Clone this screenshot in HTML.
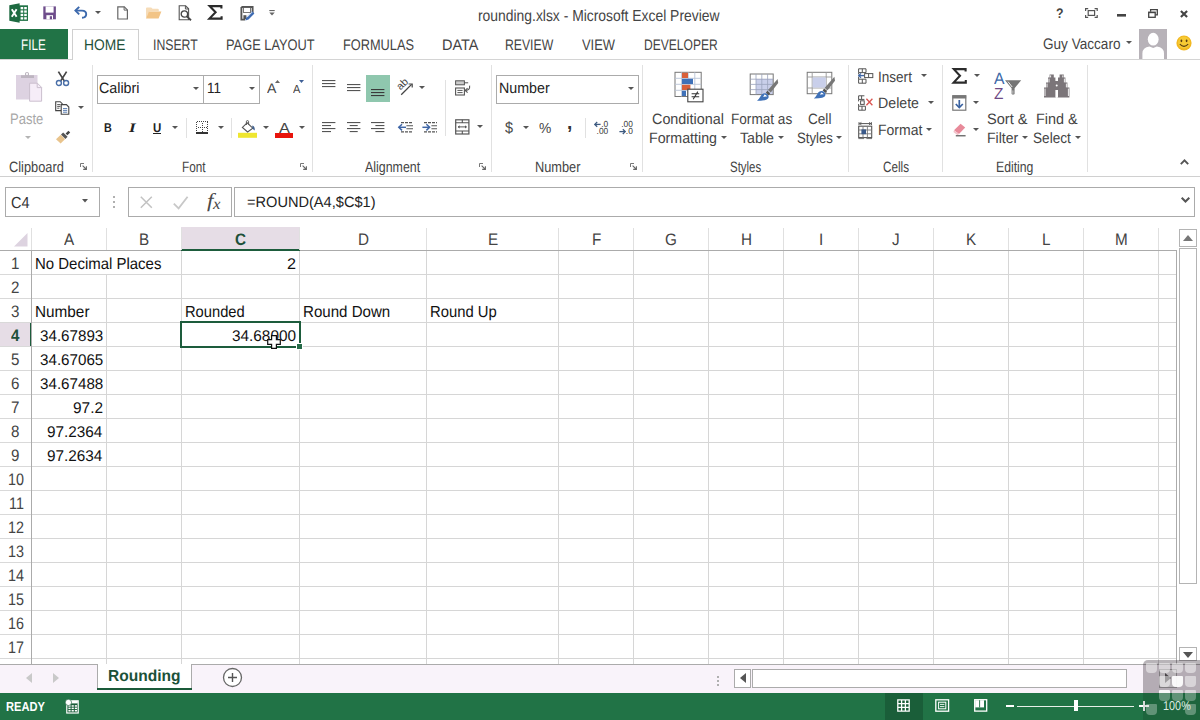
<!DOCTYPE html>
<html><head><meta charset="utf-8"><title>rounding.xlsx - Microsoft Excel Preview</title>
<style>
html,body{margin:0;padding:0;}
body{width:1200px;height:720px;overflow:hidden;background:#fff;position:relative;font-family:"Liberation Sans",sans-serif;text-rendering:geometricPrecision;}
.t{position:absolute;white-space:nowrap;line-height:20px;height:20px;transform-origin:0 50%;display:inline-block;}
.a{position:absolute;}
svg{position:absolute;overflow:visible;}
</style></head><body>
<div class="a" style="left:0px;top:29px;width:68px;height:31px;background:#217346;"></div>
<div class="a" style="left:0px;top:59px;width:1200px;height:1px;background:#d4d4d4;"></div>
<div class="a" style="left:72px;top:29px;width:67px;height:31px;background:#fff;border:1px solid #d0d0d0;box-sizing:border-box;border-bottom:none;"></div>
<div class="a" style="left:0px;top:176px;width:1200px;height:1px;background:#d0d0d0;"></div>
<div class="a" style="left:92px;top:65px;width:1px;height:107px;background:#e1e1e1;"></div>
<div class="a" style="left:312px;top:65px;width:1px;height:107px;background:#e1e1e1;"></div>
<div class="a" style="left:491px;top:65px;width:1px;height:107px;background:#e1e1e1;"></div>
<div class="a" style="left:642px;top:65px;width:1px;height:107px;background:#e1e1e1;"></div>
<div class="a" style="left:848px;top:65px;width:1px;height:107px;background:#e1e1e1;"></div>
<div class="a" style="left:942px;top:65px;width:1px;height:107px;background:#e1e1e1;"></div>
<div class="a" style="left:1087px;top:65px;width:1px;height:107px;background:#e1e1e1;"></div>
<div class="a" style="left:186px;top:118px;width:1px;height:20px;background:#e1e1e1;"></div>
<div class="a" style="left:231px;top:118px;width:1px;height:20px;background:#e1e1e1;"></div>
<div class="a" style="left:445px;top:80px;width:1px;height:56px;background:#e1e1e1;"></div>
<div class="a" style="left:585px;top:118px;width:1px;height:20px;background:#e1e1e1;"></div>
<div class="a" style="left:97px;top:75px;width:107px;height:29px;background:#fff;border:1px solid #ababab;box-sizing:border-box;"></div>
<div class="a" style="left:203px;top:75px;width:57px;height:29px;background:#fff;border:1px solid #ababab;box-sizing:border-box;"></div>
<div class="a" style="left:496px;top:75px;width:143px;height:29px;background:#fff;border:1px solid #ababab;box-sizing:border-box;"></div>
<div class="a" style="left:366px;top:75px;width:24px;height:27px;background:#8fc7ae;"></div>
<div class="a" style="left:5px;top:187px;width:95px;height:30px;background:#fff;border:1px solid #ababab;box-sizing:border-box;"></div>
<div class="a" style="left:128px;top:187px;width:104px;height:30px;background:#fff;border:1px solid #ababab;box-sizing:border-box;"></div>
<div class="a" style="left:234px;top:187px;width:961px;height:30px;background:#fff;border:1px solid #ababab;box-sizing:border-box;"></div>
<div class="a" style="left:113px;top:196px;width:2px;height:2px;background:#b0b0b0;"></div>
<div class="a" style="left:113px;top:201px;width:2px;height:2px;background:#b0b0b0;"></div>
<div class="a" style="left:113px;top:206px;width:2px;height:2px;background:#b0b0b0;"></div>
<div class="a" style="left:181px;top:227px;width:119px;height:23px;background:#e6dde6;"></div>
<div class="a" style="left:0px;top:323px;width:31px;height:23px;background:#e6dde6;"></div>
<div class="a" style="left:0px;top:250px;width:1177px;height:1px;background:#ababab;"></div>
<div class="a" style="left:181px;top:249px;width:119px;height:2px;background:#1d5c3c;"></div>
<div class="a" style="left:30px;top:322px;width:2px;height:25px;background:#1d5c3c;"></div>
<div class="a" style="left:31px;top:228px;width:1px;height:22px;background:#e0e0e0;"></div>
<div class="a" style="left:106px;top:228px;width:1px;height:22px;background:#e0e0e0;"></div>
<div class="a" style="left:181px;top:228px;width:1px;height:22px;background:#e0e0e0;"></div>
<div class="a" style="left:299px;top:228px;width:1px;height:22px;background:#e0e0e0;"></div>
<div class="a" style="left:426px;top:228px;width:1px;height:22px;background:#e0e0e0;"></div>
<div class="a" style="left:558px;top:228px;width:1px;height:22px;background:#e0e0e0;"></div>
<div class="a" style="left:633px;top:228px;width:1px;height:22px;background:#e0e0e0;"></div>
<div class="a" style="left:708px;top:228px;width:1px;height:22px;background:#e0e0e0;"></div>
<div class="a" style="left:783px;top:228px;width:1px;height:22px;background:#e0e0e0;"></div>
<div class="a" style="left:858px;top:228px;width:1px;height:22px;background:#e0e0e0;"></div>
<div class="a" style="left:933px;top:228px;width:1px;height:22px;background:#e0e0e0;"></div>
<div class="a" style="left:1008px;top:228px;width:1px;height:22px;background:#e0e0e0;"></div>
<div class="a" style="left:1083px;top:228px;width:1px;height:22px;background:#e0e0e0;"></div>
<div class="a" style="left:1158px;top:228px;width:1px;height:22px;background:#e0e0e0;"></div>
<div class="a" style="left:32px;top:274px;width:1145px;height:1px;background:#d6d6d6;"></div>
<div class="a" style="left:0px;top:274px;width:31px;height:1px;background:#d9d9d9;"></div>
<div class="a" style="left:32px;top:298px;width:1145px;height:1px;background:#d6d6d6;"></div>
<div class="a" style="left:0px;top:298px;width:31px;height:1px;background:#d9d9d9;"></div>
<div class="a" style="left:32px;top:322px;width:1145px;height:1px;background:#d6d6d6;"></div>
<div class="a" style="left:0px;top:322px;width:31px;height:1px;background:#d9d9d9;"></div>
<div class="a" style="left:32px;top:346px;width:1145px;height:1px;background:#d6d6d6;"></div>
<div class="a" style="left:0px;top:346px;width:31px;height:1px;background:#d9d9d9;"></div>
<div class="a" style="left:32px;top:370px;width:1145px;height:1px;background:#d6d6d6;"></div>
<div class="a" style="left:0px;top:370px;width:31px;height:1px;background:#d9d9d9;"></div>
<div class="a" style="left:32px;top:394px;width:1145px;height:1px;background:#d6d6d6;"></div>
<div class="a" style="left:0px;top:394px;width:31px;height:1px;background:#d9d9d9;"></div>
<div class="a" style="left:32px;top:418px;width:1145px;height:1px;background:#d6d6d6;"></div>
<div class="a" style="left:0px;top:418px;width:31px;height:1px;background:#d9d9d9;"></div>
<div class="a" style="left:32px;top:442px;width:1145px;height:1px;background:#d6d6d6;"></div>
<div class="a" style="left:0px;top:442px;width:31px;height:1px;background:#d9d9d9;"></div>
<div class="a" style="left:32px;top:466px;width:1145px;height:1px;background:#d6d6d6;"></div>
<div class="a" style="left:0px;top:466px;width:31px;height:1px;background:#d9d9d9;"></div>
<div class="a" style="left:32px;top:490px;width:1145px;height:1px;background:#d6d6d6;"></div>
<div class="a" style="left:0px;top:490px;width:31px;height:1px;background:#d9d9d9;"></div>
<div class="a" style="left:32px;top:514px;width:1145px;height:1px;background:#d6d6d6;"></div>
<div class="a" style="left:0px;top:514px;width:31px;height:1px;background:#d9d9d9;"></div>
<div class="a" style="left:32px;top:538px;width:1145px;height:1px;background:#d6d6d6;"></div>
<div class="a" style="left:0px;top:538px;width:31px;height:1px;background:#d9d9d9;"></div>
<div class="a" style="left:32px;top:562px;width:1145px;height:1px;background:#d6d6d6;"></div>
<div class="a" style="left:0px;top:562px;width:31px;height:1px;background:#d9d9d9;"></div>
<div class="a" style="left:32px;top:586px;width:1145px;height:1px;background:#d6d6d6;"></div>
<div class="a" style="left:0px;top:586px;width:31px;height:1px;background:#d9d9d9;"></div>
<div class="a" style="left:32px;top:610px;width:1145px;height:1px;background:#d6d6d6;"></div>
<div class="a" style="left:0px;top:610px;width:31px;height:1px;background:#d9d9d9;"></div>
<div class="a" style="left:32px;top:634px;width:1145px;height:1px;background:#d6d6d6;"></div>
<div class="a" style="left:0px;top:634px;width:31px;height:1px;background:#d9d9d9;"></div>
<div class="a" style="left:32px;top:658px;width:1145px;height:1px;background:#d6d6d6;"></div>
<div class="a" style="left:0px;top:658px;width:31px;height:1px;background:#d9d9d9;"></div>
<div class="a" style="left:106px;top:275px;width:1px;height:389px;background:#d6d6d6;"></div>
<div class="a" style="left:181px;top:251px;width:1px;height:413px;background:#d6d6d6;"></div>
<div class="a" style="left:299px;top:251px;width:1px;height:413px;background:#d6d6d6;"></div>
<div class="a" style="left:426px;top:251px;width:1px;height:413px;background:#d6d6d6;"></div>
<div class="a" style="left:558px;top:251px;width:1px;height:413px;background:#d6d6d6;"></div>
<div class="a" style="left:633px;top:251px;width:1px;height:413px;background:#d6d6d6;"></div>
<div class="a" style="left:708px;top:251px;width:1px;height:413px;background:#d6d6d6;"></div>
<div class="a" style="left:783px;top:251px;width:1px;height:413px;background:#d6d6d6;"></div>
<div class="a" style="left:858px;top:251px;width:1px;height:413px;background:#d6d6d6;"></div>
<div class="a" style="left:933px;top:251px;width:1px;height:413px;background:#d6d6d6;"></div>
<div class="a" style="left:1008px;top:251px;width:1px;height:413px;background:#d6d6d6;"></div>
<div class="a" style="left:1083px;top:251px;width:1px;height:413px;background:#d6d6d6;"></div>
<div class="a" style="left:1158px;top:251px;width:1px;height:413px;background:#d6d6d6;"></div>
<div class="a" style="left:31px;top:251px;width:1px;height:413px;background:#ababab;"></div>
<div class="a" style="left:1176px;top:251px;width:1px;height:413px;background:#ababab;"></div>
<svg style="left:12px;top:231px" width="18" height="18" viewBox="0 0 18 18"><path d="M15.5 2 L15.5 15.5 L2 15.5 Z" fill="#ddd3e0"/></svg>
<div class="a" style="left:180px;top:321px;width:121px;height:27px;border:2px solid #1d5c3c;box-sizing:border-box;"></div>
<div class="a" style="left:296px;top:343px;width:5px;height:5px;background:#256b48;border:1px solid #fff;box-sizing:border-box;box-sizing:content-box;"></div>
<div class="a" style="left:1179px;top:229px;width:18px;height:18px;background:#fff;border:1px solid #b4b4b4;box-sizing:border-box;"></div>
<div class="a" style="left:1179px;top:248px;width:18px;height:336px;background:#fff;border:1px solid #b4b4b4;box-sizing:border-box;"></div>
<div class="a" style="left:1179px;top:647px;width:18px;height:14px;background:#fff;border:1px solid #b4b4b4;box-sizing:border-box;"></div>
<svg style="left:1183px;top:235px" width="10" height="6" viewBox="0 0 10 6"><path d="M0 6 L5 0 L10 6 Z" fill="#777"/></svg>
<svg style="left:1183px;top:652px" width="10" height="6" viewBox="0 0 10 6"><path d="M0 0 L5 6 L10 0 Z" fill="#555"/></svg>
<svg style="left:1181px;top:197px" width="9" height="6" viewBox="0 0 9 6"><path d="M0.7 0.7 L4.5 4.5 L8.3 0.7" fill="none" stroke="#555" stroke-width="2"/></svg>
<div class="a" style="left:0px;top:664px;width:1200px;height:29px;background:#f9f3fa;"></div>
<div class="a" style="left:0px;top:664px;width:1200px;height:1px;background:#ababab;"></div>
<div class="a" style="left:97px;top:664px;width:95px;height:24px;background:#fff;"></div>
<div class="a" style="left:97px;top:664px;width:1px;height:25px;background:#ababab;"></div>
<div class="a" style="left:191px;top:664px;width:1px;height:25px;background:#ababab;"></div>
<div class="a" style="left:97px;top:688px;width:95px;height:2px;background:#1a5a39;"></div>
<svg style="left:26px;top:673px" width="6" height="10" viewBox="0 0 6 10"><path d="M6 0 L0 5 L6 10 Z" fill="#c9c9c9"/></svg>
<svg style="left:53px;top:673px" width="6" height="10" viewBox="0 0 6 10"><path d="M0 0 L6 5 L0 10 Z" fill="#c9c9c9"/></svg>
<svg style="left:222px;top:667px" width="21" height="21" viewBox="0 0 21 21"><circle cx="10.5" cy="10.5" r="9" fill="#fff" stroke="#666" stroke-width="1.3"/><path d="M10.5 6 V15 M6 10.5 H15" stroke="#555" stroke-width="1.4"/></svg>
<div class="a" style="left:717px;top:676px;width:2px;height:2px;background:#b0b0b0;"></div>
<div class="a" style="left:717px;top:680px;width:2px;height:2px;background:#b0b0b0;"></div>
<div class="a" style="left:717px;top:684px;width:2px;height:2px;background:#b0b0b0;"></div>
<div class="a" style="left:734px;top:669px;width:17px;height:19px;background:#fff;border:1px solid #ababab;box-sizing:border-box;"></div>
<div class="a" style="left:752px;top:669px;width:375px;height:19px;background:#fff;border:1px solid #ababab;box-sizing:border-box;"></div>
<div class="a" style="left:1159px;top:669px;width:18px;height:19px;background:#fff;border:1px solid #ababab;box-sizing:border-box;"></div>
<svg style="left:740px;top:673px" width="6" height="10" viewBox="0 0 6 10"><path d="M6 0 L0 5 L6 10 Z" fill="#555"/></svg>
<svg style="left:1165px;top:673px" width="6" height="10" viewBox="0 0 6 10"><path d="M0 0 L6 5 L0 10 Z" fill="#555"/></svg>
<div class="a" style="left:0px;top:693px;width:1200px;height:27px;background:#217346;"></div>
<div class="a" style="left:884.5px;top:693px;width:38.5px;height:27px;background:#1a5e39;"></div>
<!-- QAT icons -->
<svg style="left:9px;top:3px" width="20" height="20" viewBox="0 0 20 20">
  <rect x="10" y="2.3" width="9" height="15.6" fill="#217346"/>
  <g fill="#fff"><rect x="11.6" y="4" width="2.6" height="2.3"/><rect x="15.2" y="4" width="2.6" height="2.3"/><rect x="11.6" y="7.4" width="2.6" height="2.3"/><rect x="15.2" y="7.4" width="2.6" height="2.3"/><rect x="11.6" y="10.8" width="2.6" height="2.3"/><rect x="15.2" y="10.8" width="2.6" height="2.3"/><rect x="11.6" y="14.2" width="2.6" height="2.3"/><rect x="15.2" y="14.2" width="2.6" height="2.3"/></g>
  <path d="M0.3 2.2 L10.6 0.3 L10.6 19.7 L0.3 17.8 Z" fill="#1d6a41"/>
  <path d="M2.8 6.2 L7.6 13.8 M7.6 6.2 L2.8 13.8" stroke="#fff" stroke-width="1.9" fill="none"/>
</svg>
<svg style="left:43px;top:6px" width="14" height="14" viewBox="0 0 14 14">
  <path d="M0.3 0.4 H12.9 V13.3 H0.3 Z" fill="#6e4d8b"/>
  <rect x="2.6" y="0.4" width="8" height="6.2" fill="#fff"/>
  <rect x="3.4" y="9.2" width="6.6" height="4.1" fill="#fff"/>
  <rect x="3.4" y="9.2" width="6.6" height="1.6" fill="#6e4d8b" opacity="0"/>
  <rect x="6.8" y="10.2" width="2.2" height="3.1" fill="#6e4d8b"/>
</svg>
<svg style="left:74px;top:6px" width="14" height="13" viewBox="0 0 14 13">
  <path d="M1.6 4.6 H8 C11 4.6 12.2 6.4 12.2 8.2 C12.2 10.2 10.6 11.6 8 11.8" fill="none" stroke="#3c69ad" stroke-width="1.9"/>
  <path d="M5.2 0.8 L1.4 4.6 L5.2 8.4" fill="none" stroke="#3c69ad" stroke-width="1.9"/>
</svg>
<svg style="left:94.5px;top:11px" width="6" height="3" viewBox="0 0 6 3"><path d="M0 0 H6 L3 3 Z" fill="#555"/></svg>
<svg style="left:117px;top:6px" width="12" height="14" viewBox="0 0 12 14">
  <path d="M0.8 0.8 H7.3 L10.4 3.9 V13 H0.8 Z" fill="#fff" stroke="#666" stroke-width="1.2"/>
  <path d="M7.1 0.8 V4.1 H10.4" fill="none" stroke="#666" stroke-width="1"/>
</svg>
<svg style="left:145px;top:6px" width="17" height="13" viewBox="0 0 17 13">
  <path d="M1 12.4 V2.4 Q1 1.4 2 1.4 H6.2 L7.6 2.8 H12.8 Q13.8 2.8 13.8 3.8 V5.2 H4.4 Z" fill="#f6dcb8"/>
  <path d="M1 12.6 L3.9 5.4 H16.4 L13.6 12.6 Z" fill="#f2c486"/>
</svg>
<svg style="left:178px;top:5px" width="15" height="16" viewBox="0 0 15 16">
  <path d="M1.2 0.8 H7.6 L10.6 3.8 V14.8 H1.2 Z" fill="#fff" stroke="#555" stroke-width="1.1"/>
  <path d="M7.4 0.8 V4 H10.6" fill="none" stroke="#555" stroke-width="1"/>
  <circle cx="6.4" cy="9" r="3.2" fill="#fff" stroke="#444" stroke-width="1.3"/>
  <path d="M8.8 11.4 L13 15.2" stroke="#444" stroke-width="1.9"/>
</svg>
<svg style="left:208px;top:5px" width="15" height="15" viewBox="0 0 15 15">
  <path d="M13.4 3.4 V1.1 H1.6 L7.6 7.3 L1.4 13.6 H13.6 V11.2" fill="none" stroke="#2b2b2b" stroke-width="2.1" stroke-linejoin="miter"/>
</svg>
<svg style="left:239.5px;top:5.5px" width="15" height="15" viewBox="0 0 15 15">
  <path d="M1.4 1 H12.6 V7 M5 13.6 H1.4 V1" fill="none" stroke="#555" stroke-width="1.9"/>
  <rect x="3.6" y="1.6" width="6.8" height="5" fill="#fff" stroke="#555" stroke-width="0.8"/>
  <rect x="3.4" y="9.2" width="3" height="4" fill="#555"/>
  <path d="M5.4 14.4 L6.3 11.2 L12.2 5.3 L14.4 7.5 L8.5 13.4 Z" fill="#3d6bb3"/>
  <path d="M6.9 11.3 L12.0 6.2" stroke="#fff" stroke-width="0.9"/>
</svg>
<svg style="left:268.5px;top:10px" width="6" height="6" viewBox="0 0 6 6"><rect x="0.3" y="0" width="5.4" height="1.1" fill="#666"/><path d="M0.3 2.6 H5.7 L3 5.6 Z" fill="#666"/></svg>
<!-- window controls -->
<svg style="left:1085px;top:8px" width="13" height="10" viewBox="0 0 13 10">
  <rect x="3.2" y="2.6" width="6.4" height="4.8" fill="none" stroke="#555" stroke-width="1.2"/>
  <path d="M0.6 3 V0.6 H3.2 M9.6 0.6 H12.2 V3 M12.2 7 V9.4 H9.6 M3.2 9.4 H0.6 V7" fill="none" stroke="#555" stroke-width="1.2"/>
</svg>
<svg style="left:1117px;top:13.5px" width="9" height="3" viewBox="0 0 9 3"><rect width="9" height="2.6" fill="#444"/></svg>
<svg style="left:1148px;top:8.5px" width="10" height="9" viewBox="0 0 10 9">
  <path d="M2.6 2.8 V0.7 H9.3 V5.8 H7.2" fill="none" stroke="#444" stroke-width="1.3"/>
  <rect x="0.7" y="3.2" width="6.5" height="5.1" fill="#fff" stroke="#444" stroke-width="1.3"/>
  <rect x="0.7" y="3" width="6.5" height="1.2" fill="#444"/>
</svg>
<svg style="left:1180px;top:9.5px" width="8" height="8" viewBox="0 0 8 8"><path d="M0.9 0.9 L7.1 7.1 M7.1 0.9 L0.9 7.1" stroke="#444" stroke-width="2.1"/></svg>
<svg style="left:1126px;top:40.5px" width="6" height="3" viewBox="0 0 6 3"><path d="M0 0 H6 L3 3 Z" fill="#555"/></svg>
<!-- avatar -->
<div class="a" style="left:1139px;top:29px;width:28px;height:30px;background:#b7b2b8"></div>
<svg style="left:1139px;top:29px" width="28" height="30" viewBox="0 0 28 30">
  <ellipse cx="14.2" cy="10.2" rx="5.4" ry="6.4" fill="#fff"/>
  <path d="M3.4 30 V24.5 Q3.4 18.6 10.5 17.6 L14.2 19 L17.9 17.6 Q25 18.6 25 24.5 V30 Z" fill="#fff"/>
</svg>
<!-- smiley -->
<svg style="left:1176px;top:35px" width="16" height="16" viewBox="0 0 16 16">
  <circle cx="8" cy="8" r="7.6" fill="#f2b822"/>
  <circle cx="8" cy="7.4" r="6" fill="#f9d23c" opacity="0.7"/>
  <ellipse cx="5.4" cy="5.8" rx="0.9" ry="1.4" fill="#5a3d10"/>
  <ellipse cx="10.6" cy="5.8" rx="0.9" ry="1.4" fill="#5a3d10"/>
  <path d="M3.8 9.2 Q8 13.6 12.2 9.2" fill="none" stroke="#5a3d10" stroke-width="1.1"/>
</svg>
<!-- Clipboard group -->
<svg style="left:15px;top:71px" width="28" height="32" viewBox="0 0 28 32">
  <rect x="1" y="4" width="21.5" height="24.5" fill="#ddd2e1"/>
  <path d="M6 7 V4.2 H10 V2.6 Q10 1 12 1 Q14 1 14 2.6 V4.2 H19 V7 Z" fill="#bdb5c0"/>
  <rect x="11" y="2.2" width="2" height="1.6" fill="#fff"/>
  <path d="M14.6 12.2 H22.4 L26.6 16.4 V30.2 H14.6 Z" fill="#f6edf8" stroke="#cbbfce" stroke-width="1"/>
  <path d="M22.2 12.2 V16.6 H26.6" fill="none" stroke="#cbbfce" stroke-width="1"/>
</svg>
<svg style="left:24.5px;top:136px" width="6" height="3" viewBox="0 0 6 3"><path d="M0 0 H6 L3 3 Z" fill="#b4b4b4"/></svg>
<svg style="left:55px;top:71px" width="15" height="16" viewBox="0 0 15 16">
  <path d="M3.4 0.6 L9.6 10.4 M11.6 0.6 L5.4 10.4" stroke="#444" stroke-width="1.7" fill="none"/>
  <circle cx="3.9" cy="12" r="2.5" fill="#fff" stroke="#4a6fa8" stroke-width="1.4"/>
  <circle cx="11.1" cy="12" r="2.5" fill="#fff" stroke="#4a6fa8" stroke-width="1.4"/>
</svg>
<svg style="left:55px;top:101px" width="15" height="14" viewBox="0 0 15 14">
  <path d="M0.7 0.7 H5.2 L7.2 2.7 V9.6 H0.7 Z" fill="#fff" stroke="#444" stroke-width="1.1"/>
  <path d="M2.2 3.6 H5.4 M2.2 5.4 H5.4 M2.2 7.2 H4.4" stroke="#444" stroke-width="0.9"/>
  <path d="M6.2 3.6 H11.4 L13.8 6 V13.2 H6.2 Z" fill="#fff" stroke="#444" stroke-width="1.1"/>
  <path d="M8 7.6 H12.2 M8 9.4 H12.2 M8 11.2 H12.2" stroke="#4a6fa8" stroke-width="0.9"/>
</svg>
<svg style="left:78px;top:106px" width="6" height="3" viewBox="0 0 6 3"><path d="M0 0 H6 L3 3 Z" fill="#555"/></svg>
<svg style="left:55px;top:129.5px" width="16" height="15" viewBox="0 0 16 15">
  <path d="M1 9.2 L5.8 4.8 L10 9.2 L5.6 13.6 Z" fill="#e9c48d"/>
  <path d="M6 4.4 L8.2 2.4 L12.6 6.8 L10.4 9 Z" fill="#555"/>
  <path d="M10.6 3.4 L13.4 0.8 L15.2 2.6 L12.4 5.2 Z" fill="#444"/>
</svg>
<!-- Font group -->
<svg style="left:193px;top:86.5px" width="6" height="3" viewBox="0 0 6 3"><path d="M0 0 H6 L3 3 Z" fill="#555"/></svg>
<svg style="left:249px;top:86.5px" width="6" height="3" viewBox="0 0 6 3"><path d="M0 0 H6 L3 3 Z" fill="#555"/></svg>
<svg style="left:172px;top:125.5px" width="6" height="3" viewBox="0 0 6 3"><path d="M0 0 H6 L3 3 Z" fill="#555"/></svg>
<div class="a" style="left:153px;top:133.2px;width:8.2px;height:1.2px;background:#222"></div>
<svg style="left:274.5px;top:80px" width="5" height="3" viewBox="0 0 5 3"><path d="M0 3 H5 L2.5 0 Z" fill="#666"/></svg>
<svg style="left:299px;top:80px" width="5" height="3" viewBox="0 0 5 3"><path d="M0 0 H5 L2.5 3 Z" fill="#3e5f96"/></svg>
<!-- borders -->
<svg style="left:196px;top:121px" width="12" height="13" viewBox="0 0 12 13" shape-rendering="crispEdges">
  <path d="M0.5 0.5 H11.5 M0.5 0.5 V11 M11.5 0.5 V11 M6 2 V10.5 M2 6 H10.5" fill="none" stroke="#444" stroke-width="1" stroke-dasharray="1 1"/>
  <rect x="0" y="11" width="12" height="2" fill="#333"/>
</svg>
<svg style="left:217.5px;top:126px" width="6" height="3" viewBox="0 0 6 3"><path d="M0 0 H6 L3 3 Z" fill="#555"/></svg>
<!-- fill bucket -->
<svg style="left:238px;top:120px" width="20" height="18" viewBox="0 0 20 18">
  <rect x="0" y="12.8" width="19" height="5" fill="#efe630"/>
  <path d="M9.2 2.8 L14.8 8.2 L9.6 12 L4.4 7.4 Z" fill="#fff" stroke="#555" stroke-width="1.1"/>
  <path d="M8.4 5 V1.6 Q8.4 0.6 9.4 0.6 Q10.6 0.6 10.6 1.6 V4.6" fill="none" stroke="#555" stroke-width="1"/>
  <path d="M14.2 5.4 Q17 6 16.8 10.4 Q15.2 9.4 14.4 8.4 Z" fill="#41618f"/>
</svg>
<svg style="left:262.5px;top:126px" width="6" height="3" viewBox="0 0 6 3"><path d="M0 0 H6 L3 3 Z" fill="#555"/></svg>
<div class="a" style="left:274.7px;top:133px;width:18.8px;height:4.8px;background:#e8140c"></div>
<svg style="left:299px;top:126px" width="6" height="3" viewBox="0 0 6 3"><path d="M0 0 H6 L3 3 Z" fill="#555"/></svg>
<!-- launchers -->
<svg style="left:79.5px;top:163px" width="7" height="7" viewBox="0 0 7 7"><path d="M0.5 4 V0.5 H4" fill="none" stroke="#777" stroke-width="1"/><path d="M2.6 2.6 L6 6 M6.4 3.2 V6.4 H3.2" fill="none" stroke="#666" stroke-width="1.1"/></svg>
<svg style="left:300px;top:163px" width="7" height="7" viewBox="0 0 7 7"><path d="M0.5 4 V0.5 H4" fill="none" stroke="#777" stroke-width="1"/><path d="M2.6 2.6 L6 6 M6.4 3.2 V6.4 H3.2" fill="none" stroke="#666" stroke-width="1.1"/></svg>
<svg style="left:479px;top:163px" width="7" height="7" viewBox="0 0 7 7"><path d="M0.5 4 V0.5 H4" fill="none" stroke="#777" stroke-width="1"/><path d="M2.6 2.6 L6 6 M6.4 3.2 V6.4 H3.2" fill="none" stroke="#666" stroke-width="1.1"/></svg>
<svg style="left:630px;top:163px" width="7" height="7" viewBox="0 0 7 7"><path d="M0.5 4 V0.5 H4" fill="none" stroke="#777" stroke-width="1"/><path d="M2.6 2.6 L6 6 M6.4 3.2 V6.4 H3.2" fill="none" stroke="#666" stroke-width="1.1"/></svg>
<svg style="left:322.4px;top:80px" width="14" height="8" viewBox="0 0 14 8"><rect x="0" y="0" width="13.4" height="1.1" fill="#555"/><rect x="0" y="3" width="13.4" height="1.1" fill="#555"/><rect x="0" y="6" width="13.4" height="1.1" fill="#555"/></svg>
<svg style="left:347px;top:84.2px" width="14" height="8" viewBox="0 0 14 8"><rect x="0" y="0" width="13.4" height="1.1" fill="#555"/><rect x="0" y="3" width="13.4" height="1.1" fill="#555"/><rect x="0" y="6" width="13.4" height="1.1" fill="#555"/></svg>
<svg style="left:371px;top:88.8px" width="14" height="8" viewBox="0 0 14 8"><rect x="0" y="0" width="13.4" height="1.1" fill="#3a3a3a"/><rect x="0" y="3" width="13.4" height="1.1" fill="#3a3a3a"/><rect x="0" y="6" width="13.4" height="1.1" fill="#3a3a3a"/></svg>
<svg style="left:322.4px;top:122px" width="14" height="11" viewBox="0 0 14 11"><rect x="0" y="0" width="13.4" height="1.1" fill="#555"/><rect x="0" y="3" width="9" height="1.1" fill="#555"/><rect x="0" y="6" width="13.4" height="1.1" fill="#555"/><rect x="0" y="9" width="9" height="1.1" fill="#555"/></svg>
<svg style="left:347px;top:122px" width="14" height="11" viewBox="0 0 14 11"><rect x="0" y="0" width="13.4" height="1.1" fill="#555"/><rect x="2.7" y="3" width="8" height="1.1" fill="#555"/><rect x="0" y="6" width="13.4" height="1.1" fill="#555"/><rect x="2.7" y="9" width="8" height="1.1" fill="#555"/></svg>
<svg style="left:371px;top:122px" width="14" height="11" viewBox="0 0 14 11"><rect x="0" y="0" width="13.4" height="1.1" fill="#555"/><rect x="4.4" y="3" width="9" height="1.1" fill="#555"/><rect x="0" y="6" width="13.4" height="1.1" fill="#555"/><rect x="4.4" y="9" width="9" height="1.1" fill="#555"/></svg>
<!-- orientation -->
<svg style="left:396px;top:79px" width="18" height="17" viewBox="0 0 18 17">
  <text x="0" y="0" transform="translate(4.6,11.6) rotate(-45)" font-family="Liberation Sans, sans-serif" font-size="10.5" fill="#444">ab</text>
  <path d="M5.2 15.8 L15.6 5.4" stroke="#444" stroke-width="1.3"/>
  <path d="M12.6 5 H16.2 V8.6" fill="none" stroke="#444" stroke-width="1.2"/>
</svg>
<svg style="left:418.5px;top:86px" width="6" height="3" viewBox="0 0 6 3"><path d="M0 0 H6 L3 3 Z" fill="#555"/></svg>
<!-- decrease indent -->
<svg style="left:397.5px;top:121.5px" width="15" height="11" viewBox="0 0 15 11">
  <path d="M3 0.6 H15 M3 9.9 H15" stroke="#555" stroke-width="1.1" stroke-dasharray="3 1"/>
  <path d="M8.4 3.7 H15 M8.4 6.8 H15" stroke="#555" stroke-width="1.1"/>
  <path d="M0.8 5.3 H8" stroke="#3f66a6" stroke-width="1.5"/>
  <path d="M4 2.2 L0.8 5.3 L4 8.4" fill="none" stroke="#3f66a6" stroke-width="1.5"/>
</svg>
<!-- increase indent -->
<svg style="left:422px;top:121.5px" width="15" height="11" viewBox="0 0 15 11">
  <path d="M2 0.6 H15 M2 9.9 H15" stroke="#555" stroke-width="1.1" stroke-dasharray="3 1"/>
  <path d="M9.4 3.7 H15 M9.4 6.8 H15" stroke="#555" stroke-width="1.1"/>
  <path d="M0.4 5.3 H7.6" stroke="#3f66a6" stroke-width="1.5"/>
  <path d="M4.4 2.2 L7.6 5.3 L4.4 8.4" fill="none" stroke="#3f66a6" stroke-width="1.5"/>
</svg>
<!-- wrap text -->
<svg style="left:454.5px;top:79.5px" width="16" height="16" viewBox="0 0 16 16">
  <rect x="0.6" y="0.8" width="8.8" height="4" fill="#ccc" stroke="#555" stroke-width="1"/>
  <path d="M9.4 2.8 H13.2" stroke="#555" stroke-width="1"/>
  <rect x="0.6" y="8" width="8.8" height="7" fill="#fff" stroke="#555" stroke-width="1.1"/>
  <path d="M2.4 10.4 H7.6 M2.4 12.6 H7.6" stroke="#555" stroke-width="1"/>
  <path d="M14.6 5.6 Q15.2 10.4 10.6 10.4" fill="none" stroke="#555" stroke-width="1.1"/>
  <path d="M12.6 8.2 L10.2 10.4 L12.6 12.6" fill="none" stroke="#555" stroke-width="1.1"/>
</svg>
<!-- merge -->
<svg style="left:454.5px;top:118.5px" width="15" height="16" viewBox="0 0 15 16">
  <rect x="0.7" y="0.8" width="13.2" height="14.2" fill="#fff" stroke="#555" stroke-width="1.2"/>
  <path d="M0.7 3.8 H13.9 M0.7 12 H13.9 M7.3 0.8 V3.8 M7.3 12 V15" stroke="#555" stroke-width="1.1"/>
  <path d="M3 7.9 H11.6" stroke="#555" stroke-width="1"/>
  <path d="M4.6 6.2 L2.8 7.9 L4.6 9.6 Z M10 6.2 L11.8 7.9 L10 9.6 Z" fill="#555"/>
</svg>
<svg style="left:477px;top:125px" width="6" height="3" viewBox="0 0 6 3"><path d="M0 0 H6 L3 3 Z" fill="#555"/></svg>
<!-- Number group -->
<svg style="left:628px;top:86.5px" width="6" height="3" viewBox="0 0 6 3"><path d="M0 0 H6 L3 3 Z" fill="#555"/></svg>
<svg style="left:523px;top:126px" width="6" height="3" viewBox="0 0 6 3"><path d="M0 0 H6 L3 3 Z" fill="#555"/></svg>
<svg style="left:594px;top:120px" width="15" height="15" viewBox="0 0 15 15" font-family="Liberation Sans, sans-serif" font-size="8.8" fill="#333">
  <text x="7.2" y="6.8" textLength="7" lengthAdjust="spacingAndGlyphs">.0</text>
  <text x="2.6" y="14.2" textLength="11.6" lengthAdjust="spacingAndGlyphs">.00</text>
  <path d="M0.8 4.4 H6.6" stroke="#3d5a80" stroke-width="1.3"/>
  <path d="M3.2 2 L0.8 4.4 L3.2 6.8" fill="none" stroke="#3d5a80" stroke-width="1.3"/>
</svg>
<svg style="left:618.5px;top:120px" width="15" height="15" viewBox="0 0 15 15" font-family="Liberation Sans, sans-serif" font-size="8.8" fill="#333">
  <text x="2.2" y="6.8" textLength="11.6" lengthAdjust="spacingAndGlyphs">.00</text>
  <text x="6.8" y="14.2" textLength="7" lengthAdjust="spacingAndGlyphs">.0</text>
  <path d="M0.4 11.6 H6.2" stroke="#3d5a80" stroke-width="1.3"/>
  <path d="M3.8 9.2 L6.2 11.6 L3.8 14" fill="none" stroke="#3d5a80" stroke-width="1.3"/>
</svg>
<!-- Styles group -->
<svg style="left:674px;top:71px" width="30" height="32" viewBox="0 0 30 32">
  <rect x="1" y="1.3" width="26.2" height="24.2" fill="#fff" stroke="#777" stroke-width="1"/>
  <path d="M7.6 1.3 V25.5 M14.2 1.3 V25.5 M20.8 1.3 V25.5 M1 7.3 H27.2 M1 13.3 H27.2 M1 19.3 H27.2" stroke="#b9c3d6" stroke-width="0.9"/>
  <rect x="8" y="1.8" width="6" height="5.2" fill="#d9603a"/>
  <rect x="8" y="7.8" width="11" height="5.2" fill="#3f71b8"/>
  <rect x="8" y="13.8" width="8.4" height="5.2" fill="#d9603a"/>
  <rect x="8" y="19.8" width="4" height="5.2" fill="#3f71b8"/>
  <rect x="13.8" y="18.2" width="15.2" height="12.6" fill="#fff" stroke="#444" stroke-width="1.1"/>
  <path d="M17.6 22.8 H25.2 M17.6 25.8 H25.2 M23.8 20.6 L19.2 28.2" stroke="#333" stroke-width="1.1"/>
</svg>
<svg style="left:749px;top:73px" width="30" height="29" viewBox="0 0 30 29">
  <rect x="7" y="6" width="17" height="15.4" fill="#c9cfea"/>
  <rect x="1.2" y="1" width="23" height="20.6" fill="none" stroke="#777" stroke-width="1"/>
  <path d="M7 1 V21.6 M12.8 1 V21.6 M18.6 1 V21.6 M1.2 6.2 H24.2 M1.2 11.4 H24.2 M1.2 16.6 H24.2" stroke="#9aa3bd" stroke-width="0.8"/>
  <path d="M28.6 6 L29.2 10 L21.8 19.4 L19 17 Z" fill="#777"/>
  <path d="M18.4 17.8 L21.2 20.2 L19.6 22.2 L16.8 19.8 Z" fill="#555"/>
  <path d="M16.2 20.2 Q20 21 19.6 24.4 Q19 27.6 8 27.8 Q10 26 11.4 23.4 Q13 20 16.2 20.2 Z" fill="#3f71b8"/>
  <path d="M15.4 21.6 Q17.8 21.8 17.8 23.8 Q16.4 23.2 14.2 24 Z" fill="#fff"/>
</svg>
<svg style="left:806px;top:71px" width="30" height="30" viewBox="0 0 30 30">
  <rect x="1.2" y="1.3" width="24.6" height="21.4" fill="#fff" stroke="#777" stroke-width="1"/>
  <path d="M6.2 1.3 V22.7 M20.2 1.3 V22.7 M1.2 6 H25.8 M1.2 17 H25.8" stroke="#999" stroke-width="0.9"/>
  <rect x="6.6" y="6.4" width="13.2" height="10.2" fill="#c9cfea"/>
  <path d="M28.4 5.8 L29 9.8 L21.6 19.2 L18.8 16.8 Z" fill="#777"/>
  <path d="M18.2 17.6 L21 20 L19.4 22 L16.6 19.6 Z" fill="#555"/>
  <path d="M16 20 Q19.8 20.8 19.4 24.2 Q18.8 27.4 7.8 27.6 Q9.8 25.8 11.2 23.2 Q12.8 19.8 16 20 Z" fill="#3f71b8"/>
  <path d="M15.2 21.4 Q17.6 21.6 17.6 23.6 Q16.2 23 14 23.8 Z" fill="#fff"/>
</svg>
<svg style="left:720.5px;top:135.5px" width="6" height="3" viewBox="0 0 6 3"><path d="M0 0 H6 L3 3 Z" fill="#555"/></svg>
<svg style="left:777.5px;top:135.5px" width="6" height="3" viewBox="0 0 6 3"><path d="M0 0 H6 L3 3 Z" fill="#555"/></svg>
<svg style="left:836px;top:135.5px" width="6" height="3" viewBox="0 0 6 3"><path d="M0 0 H6 L3 3 Z" fill="#555"/></svg>
<!-- Cells group -->
<svg style="left:857.5px;top:68px" width="16" height="16" viewBox="0 0 16 16">
  <path d="M0.6 0.8 H8 V4.6 H0.6 Z M4.3 0.8 V4.6 M0.6 11.2 H8 V15.2 H0.6 Z M4.3 11.2 V15.2 M0.6 11.2 V8.6 M0.6 4.6 V6.4" fill="none" stroke="#555" stroke-width="1"/>
  <rect x="6.6" y="5.6" width="8.2" height="4" fill="#fff" stroke="#555" stroke-width="1"/>
  <path d="M10.6 5.6 V9.6" stroke="#555" stroke-width="1"/>
  <path d="M0.6 7.6 H6" stroke="#3f66a6" stroke-width="1.4"/>
  <path d="M3 5.4 L0.8 7.6 L3 9.8" fill="none" stroke="#3f66a6" stroke-width="1.3"/>
</svg>
<svg style="left:857.5px;top:95px" width="16" height="16" viewBox="0 0 16 16">
  <path d="M0.6 0.8 H6.4 M0.6 0.8 V4.4 H6.4 M3.6 0.8 V4.4 M0.6 11.2 H7.4 V15.2 H0.6 Z M4 11.2 V15.2 M0.6 11.2 V9 M0.6 4.4 V6.4" fill="none" stroke="#555" stroke-width="1"/>
  <rect x="2.6" y="5.8" width="3.6" height="3.6" fill="#fff" stroke="#555" stroke-width="1"/>
  <path d="M8.4 3.8 L14.4 10.2 M14.4 3.8 L8.4 10.2" stroke="#d9534f" stroke-width="1.3"/>
</svg>
<svg style="left:857.5px;top:121.5px" width="15" height="17" viewBox="0 0 15 17">
  <path d="M1 0.2 V3 M13.4 0.2 V3 M1.4 1.6 H13" stroke="#555" stroke-width="1"/>
  <path d="M3.4 0.4 L1.6 1.6 L3.4 2.8 M11 0.4 L12.8 1.6 L11 2.8" fill="none" stroke="#555" stroke-width="0.9"/>
  <rect x="0.7" y="4.2" width="13" height="11.4" fill="#fff" stroke="#555" stroke-width="1.1"/>
  <path d="M5 4.2 V15.6 M9.4 4.2 V15.6 M0.7 8 H13.7 M0.7 11.8 H13.7" stroke="#777" stroke-width="0.9"/>
  <rect x="3.4" y="7.4" width="4.6" height="4.8" fill="#3a5a8a"/>
  <path d="M0.4 16.6 H6 M8.4 16.6 H14" stroke="#555" stroke-width="0.8"/>
</svg>
<svg style="left:920.5px;top:74px" width="6" height="3" viewBox="0 0 6 3"><path d="M0 0 H6 L3 3 Z" fill="#555"/></svg>
<svg style="left:928px;top:101px" width="6" height="3" viewBox="0 0 6 3"><path d="M0 0 H6 L3 3 Z" fill="#555"/></svg>
<svg style="left:925.5px;top:128px" width="6" height="3" viewBox="0 0 6 3"><path d="M0 0 H6 L3 3 Z" fill="#555"/></svg>
<!-- Editing group -->
<svg style="left:951.5px;top:67.5px" width="15" height="16" viewBox="0 0 15 16">
  <path d="M13.6 3.6 V1.1 H1.8 L8 7.8 L1.6 14.6 H13.8 V12" fill="none" stroke="#2b2b2b" stroke-width="2.1" stroke-linejoin="miter"/>
</svg>
<svg style="left:973.5px;top:74px" width="6" height="3" viewBox="0 0 6 3"><path d="M0 0 H6 L3 3 Z" fill="#555"/></svg>
<svg style="left:952px;top:95px" width="15" height="16" viewBox="0 0 15 16">
  <rect x="0.8" y="0.8" width="13" height="14.4" fill="#fff" stroke="#777" stroke-width="1.2"/>
  <rect x="0.4" y="0.3" width="13.8" height="3.2" fill="#777"/>
  <path d="M7.3 5 V12.4" stroke="#3a62a0" stroke-width="1.7"/>
  <path d="M3.8 9 L7.3 12.6 L10.8 9" fill="none" stroke="#3a62a0" stroke-width="1.7"/>
</svg>
<svg style="left:972.5px;top:101px" width="6" height="3" viewBox="0 0 6 3"><path d="M0 0 H6 L3 3 Z" fill="#555"/></svg>
<svg style="left:953px;top:122.5px" width="14" height="14" viewBox="0 0 14 14">
  <path d="M7.6 0.8 L12.2 4.6 L6 11 L1 7.2 Z" fill="#e88a9a"/>
  <path d="M1 7.2 L6 11 L4.6 12.2 L0.4 9 Z" fill="#f3c2ca"/>
  <path d="M2.8 12.8 H12.6" stroke="#444" stroke-width="1.1"/>
</svg>
<svg style="left:972.5px;top:128px" width="6" height="3" viewBox="0 0 6 3"><path d="M0 0 H6 L3 3 Z" fill="#555"/></svg>
<!-- sort & filter -->
<svg style="left:1005px;top:80px" width="17" height="15" viewBox="0 0 17 15">
  <path d="M0 0.2 H16.2 L9.6 8.2 V14 Q8.1 15 6.6 14 V8.2 Z" fill="#757575"/>
  <path d="M7.4 10.4 V13.8 M8.9 10.4 V13.8" stroke="#c9c9c9" stroke-width="0.7"/>
  <path d="M3 1.6 L7.2 7" stroke="#fff" stroke-width="0.9"/>
</svg>
<!-- binoculars -->
<svg style="left:1044px;top:73.5px" width="26" height="24" viewBox="0 0 26 24">
  <g fill="#7b7579">
    <path d="M5.6 0.4 H9.8 V3.6 H11.4 V8 H12.2 V23.4 H0 V13.6 H2 V8.6 H4 V3.6 H5.6 Z"/>
    <path d="M15.6 0.4 H19.8 V3.6 H21.4 V8.6 H23.4 V13.6 H25.4 V23.4 H13.2 V8 H14 V3.6 H15.6 Z"/>
    <rect x="11" y="7" width="4" height="9"/>
  </g>
  <path d="M6.6 1.4 V3.4 M5 4.6 V8.4 M3 9.6 V13.4 M1 14.6 V22 M18.8 1.4 V3.4 M20.4 4.6 V8.4 M22.4 9.6 V13.4 M24.4 14.6 V22" stroke="#fff" stroke-width="0.9"/>
  <circle cx="12.7" cy="11.4" r="1" fill="#fff"/>
  <rect x="11.4" y="16" width="2.6" height="7.6" fill="#fff"/>
</svg>
<svg style="left:1021.5px;top:135.5px" width="6" height="3" viewBox="0 0 6 3"><path d="M0 0 H6 L3 3 Z" fill="#555"/></svg>
<svg style="left:1074.5px;top:135.5px" width="6" height="3" viewBox="0 0 6 3"><path d="M0 0 H6 L3 3 Z" fill="#555"/></svg>
<!-- collapse ribbon -->
<svg style="left:1179.5px;top:158.5px" width="9" height="6" viewBox="0 0 9 6"><path d="M0.8 5.2 L4.5 1.4 L8.2 5.2" fill="none" stroke="#555" stroke-width="1.9"/></svg>
<!-- formula bar icons -->
<svg style="left:82px;top:199px" width="6" height="4" viewBox="0 0 6 4"><path d="M0 0 H6 L3 3.6 Z" fill="#555"/></svg>
<svg style="left:139.5px;top:196px" width="13" height="13" viewBox="0 0 13 13"><path d="M0.8 0.8 L11.8 11.8 M11.8 0.8 L0.8 11.8" stroke="#c2c2c2" stroke-width="1.5"/></svg>
<svg style="left:173px;top:196px" width="16" height="14" viewBox="0 0 16 14"><path d="M0.8 7.6 L5.6 12.4 L14.6 0.8" fill="none" stroke="#c8c8c8" stroke-width="1.8"/></svg>
<!-- status bar icons -->
<svg style="left:65px;top:698.5px" width="14" height="15" viewBox="0 0 14 15">
  <rect x="1.8" y="1.8" width="11.4" height="12.2" fill="#1a5e39" stroke="#fff" stroke-width="1.2"/>
  <rect x="6.4" y="2" width="6.4" height="2.4" fill="#fff"/>
  <g fill="#fff"><rect x="3.4" y="6.2" width="2.2" height="1.5"/><rect x="6.6" y="6.2" width="2.2" height="1.5"/><rect x="9.8" y="6.2" width="2.2" height="1.5"/>
  <rect x="3.4" y="8.6" width="2.2" height="1.5"/><rect x="6.6" y="8.6" width="2.2" height="1.5"/><rect x="9.8" y="8.6" width="2.2" height="1.5"/>
  <rect x="3.4" y="11" width="2.2" height="1.5"/><rect x="6.6" y="11" width="2.2" height="1.5"/><rect x="9.8" y="11" width="2.2" height="1.5"/></g>
  <circle cx="3.4" cy="3.4" r="3.1" fill="#fff" stroke="#1a5e39" stroke-width="0.6"/>
</svg>
<svg style="left:896.8px;top:699px" width="13" height="13" viewBox="0 0 13 13">
  <path d="M0.8 0.8 H12.2 V12.2 H0.8 Z M4.6 0.8 V12.2 M8.4 0.8 V12.2 M0.8 4.6 H12.2 M0.8 8.4 H12.2" fill="none" stroke="#fff" stroke-width="1.3"/>
</svg>
<svg style="left:935.2px;top:699px" width="15" height="13" viewBox="0 0 15 13">
  <rect x="0.8" y="0.8" width="12.8" height="11.4" fill="none" stroke="#fff" stroke-width="1.3"/>
  <rect x="3.6" y="3.2" width="7.2" height="6.6" fill="none" stroke="#fff" stroke-width="1"/>
  <path d="M5 5.4 H9.4 M5 7.6 H9.4" stroke="#fff" stroke-width="0.9"/>
</svg>
<svg style="left:974px;top:699px" width="14" height="13" viewBox="0 0 14 13">
  <rect x="0.7" y="0.7" width="12" height="11.4" fill="none" stroke="#fff" stroke-width="1.3"/>
  <path d="M1.2 1.2 H10 V8.4 H1.2 Z" fill="#fff"/>
  <path d="M5.6 1.2 V8.4" stroke="#1f6e43" stroke-width="0.9"/>
</svg>
<div class="a" style="left:1005.5px;top:705px;width:8px;height:2px;background:#fff"></div>
<div class="a" style="left:1016.5px;top:705.5px;width:117.5px;height:1px;background:#e8efe9"></div>
<div class="a" style="left:1074.2px;top:700px;width:3.6px;height:11.4px;background:#fff"></div>
<div class="a" style="left:1138.5px;top:705px;width:10px;height:2px;background:#fff"></div>
<div class="a" style="left:1142.5px;top:701px;width:2px;height:10px;background:#fff"></div>

<!-- text -->
<span class="t" id="t0" style="left:478.0px;top:6.5px;font-size:15.9px;color:#444;transform:scaleX(0.8737);">rounding.xlsx - Microsoft Excel Preview</span>
<span class="t" id="t1" style="left:21.3px;top:35.5px;font-size:15.3px;color:#fff;transform:scaleX(0.7644);">FILE</span>
<span class="t" id="t2" style="left:84.3px;top:35.5px;font-size:15.3px;color:#1d5039;transform:scaleX(0.9018);">HOME</span>
<span class="t" id="t3" style="left:152.8px;top:35.5px;font-size:15.3px;color:#444;transform:scaleX(0.8007);">INSERT</span>
<span class="t" id="t4" style="left:225.8px;top:35.5px;font-size:15.3px;color:#444;transform:scaleX(0.8391);">PAGE LAYOUT</span>
<span class="t" id="t5" style="left:342.5px;top:35.5px;font-size:15.3px;color:#444;transform:scaleX(0.8353);">FORMULAS</span>
<span class="t" id="t6" style="left:441.5px;top:35.5px;font-size:15.3px;color:#444;transform:scaleX(0.9473);">DATA</span>
<span class="t" id="t7" style="left:504.8px;top:35.5px;font-size:15.3px;color:#444;transform:scaleX(0.7988);">REVIEW</span>
<span class="t" id="t8" style="left:581.5px;top:35.5px;font-size:15.3px;color:#444;transform:scaleX(0.8441);">VIEW</span>
<span class="t" id="t9" style="left:643.5px;top:35.5px;font-size:15.3px;color:#444;transform:scaleX(0.7892);">DEVELOPER</span>
<span class="t" id="t10" style="left:1043.0px;top:34.8px;font-size:15.3px;color:#444;transform:scaleX(0.8878);">Guy Vaccaro</span>
<span class="t" id="t11" style="left:1056.0px;top:3.3px;font-size:14.0px;color:#444;transform:scaleX(0.8759);font-weight:bold;">?</span>
<span class="t" id="t12" style="left:10.0px;top:109.8px;font-size:15.2px;color:#a8a8a8;transform:scaleX(0.8573);">Paste</span>
<span class="t" id="t13" style="left:9.0px;top:158.0px;font-size:15px;color:#444;transform:scaleX(0.8533);">Clipboard</span>
<span class="t" id="t14" style="left:99.0px;top:79.3px;font-size:15px;color:#222;transform:scaleX(0.9526);">Calibri</span>
<span class="t" id="t15" style="left:206.5px;top:79.4px;font-size:15px;color:#222;transform:scaleX(0.8987);">11</span>
<span class="t" id="t16" style="left:104.4px;top:117.9px;font-size:12.8px;color:#222;transform:scaleX(0.8432);font-weight:bold;">B</span>
<span class="t" id="t17" style="left:129.3px;top:118.0px;font-size:13px;color:#222;transform:scaleX(1.3235);font-style:italic;font-weight:bold;font-family:'Liberation Serif',serif;">I</span>
<span class="t" id="t18" style="left:152.9px;top:117.7px;font-size:12.8px;color:#222;transform:scaleX(0.8973);font-weight:bold;">U</span>
<span class="t" id="t19" style="left:182.0px;top:158.0px;font-size:15px;color:#444;transform:scaleX(0.7829);">Font</span>
<span class="t" id="t20" style="left:365.3px;top:158.0px;font-size:15px;color:#444;transform:scaleX(0.8275);">Alignment</span>
<span class="t" id="t21" style="left:498.5px;top:79.3px;font-size:15px;color:#222;transform:scaleX(0.9502);">Number</span>
<span class="t" id="t22" style="left:504.5px;top:119.0px;font-size:16.0px;color:#444;transform:scaleX(0.8982);">$</span>
<span class="t" id="t23" style="left:539.2px;top:119.0px;font-size:14.5px;color:#444;transform:scaleX(0.9530);">%</span>
<span class="t" id="t24" style="left:566.5px;top:113.4px;font-size:20.0px;color:#333;transform:scaleX(0.9528);font-weight:bold;">,</span>
<span class="t" id="t25" style="left:535.0px;top:158.0px;font-size:15px;color:#444;transform:scaleX(0.8527);">Number</span>
<span class="t" id="t26" style="left:651.5px;top:109.5px;font-size:15px;color:#444;transform:scaleX(0.9579);">Conditional</span>
<span class="t" id="t27" style="left:648.5px;top:129.3px;font-size:15px;color:#444;transform:scaleX(0.9484);">Formatting</span>
<span class="t" id="t28" style="left:731.2px;top:109.5px;font-size:15px;color:#444;transform:scaleX(0.9065);">Format as</span>
<span class="t" id="t29" style="left:740.4px;top:129.3px;font-size:15px;color:#444;transform:scaleX(0.9481);">Table</span>
<span class="t" id="t30" style="left:808.2px;top:109.5px;font-size:15px;color:#444;transform:scaleX(0.9054);">Cell</span>
<span class="t" id="t31" style="left:796.8px;top:129.3px;font-size:15px;color:#444;transform:scaleX(0.8786);">Styles</span>
<span class="t" id="t32" style="left:730.3px;top:158.0px;font-size:15px;color:#444;transform:scaleX(0.7636);">Styles</span>
<span class="t" id="t33" style="left:877.5px;top:67.5px;font-size:15px;color:#444;transform:scaleX(0.9036);">Insert</span>
<span class="t" id="t34" style="left:877.5px;top:94.1px;font-size:15px;color:#444;transform:scaleX(0.9456);">Delete</span>
<span class="t" id="t35" style="left:877.5px;top:121.2px;font-size:15px;color:#444;transform:scaleX(0.9323);">Format</span>
<span class="t" id="t36" style="left:882.8px;top:158.0px;font-size:15px;color:#444;transform:scaleX(0.7798);">Cells</span>
<span class="t" id="t37" style="left:986.8px;top:109.8px;font-size:15px;color:#444;transform:scaleX(0.9715);">Sort &amp;</span>
<span class="t" id="t38" style="left:987.3px;top:129.3px;font-size:15px;color:#444;transform:scaleX(0.9357);">Filter</span>
<span class="t" id="t39" style="left:1035.5px;top:109.8px;font-size:15px;color:#444;transform:scaleX(0.9594);">Find &amp;</span>
<span class="t" id="t40" style="left:1033.0px;top:129.3px;font-size:15px;color:#444;transform:scaleX(0.9064);">Select</span>
<span class="t" id="t41" style="left:995.5px;top:158.0px;font-size:15px;color:#444;transform:scaleX(0.8153);">Editing</span>
<span class="t" id="t42" style="left:11.0px;top:192.5px;font-size:16.1px;color:#333;transform:scaleX(0.8990);">C4</span>
<span class="t" id="t43" style="left:246.5px;top:193.2px;font-size:15px;color:#222;transform:scaleX(0.9726);">=ROUND(A4,$C$1)</span>
<span class="t" id="t44" style="left:207.1px;top:191.0px;font-size:20px;color:#4a4a4a;transform:scaleX(1.1500);font-style:italic;font-family:'Liberation Serif',serif;">f</span>
<span class="t" id="t45" style="left:213.0px;top:194.5px;font-size:16px;color:#4a4a4a;transform:scaleX(1.0549);font-style:italic;font-family:'Liberation Serif',serif;">x</span>
<span class="t" id="t46" style="left:63.7px;top:230.0px;font-size:16.6px;color:#444;transform:scaleX(0.9200);">A</span>
<span class="t" id="t47" style="left:139.2px;top:230.0px;font-size:16.6px;color:#444;transform:scaleX(0.9200);">B</span>
<span class="t" id="t48" style="left:357.5px;top:230.0px;font-size:16.6px;color:#444;transform:scaleX(0.9200);">D</span>
<span class="t" id="t49" style="left:487.7px;top:230.0px;font-size:16.6px;color:#444;transform:scaleX(0.9200);">E</span>
<span class="t" id="t50" style="left:591.7px;top:230.0px;font-size:16.6px;color:#444;transform:scaleX(0.9200);">F</span>
<span class="t" id="t51" style="left:665.4px;top:230.0px;font-size:16.6px;color:#444;transform:scaleX(0.9200);">G</span>
<span class="t" id="t52" style="left:740.7px;top:230.0px;font-size:16.6px;color:#444;transform:scaleX(0.9200);">H</span>
<span class="t" id="t53" style="left:818.9px;top:230.0px;font-size:16.6px;color:#444;transform:scaleX(0.9200);">I</span>
<span class="t" id="t54" style="left:892.2px;top:230.0px;font-size:16.6px;color:#444;transform:scaleX(0.9200);">J</span>
<span class="t" id="t55" style="left:965.9px;top:230.0px;font-size:16.6px;color:#444;transform:scaleX(0.9200);">K</span>
<span class="t" id="t56" style="left:1041.8px;top:230.0px;font-size:16.6px;color:#444;transform:scaleX(0.9200);">L</span>
<span class="t" id="t57" style="left:1114.6px;top:230.0px;font-size:16.6px;color:#444;transform:scaleX(0.9200);">M</span>
<span class="t" id="t58" style="left:234.5px;top:230.0px;font-size:16.6px;color:#1d5039;transform:scaleX(0.9200);font-weight:bold;">C</span>
<span class="t" id="t59" style="left:11.1px;top:253.7px;font-size:16.6px;color:#444;transform:scaleX(0.9120);">1</span>
<span class="t" id="t60" style="left:11.1px;top:277.7px;font-size:16.6px;color:#444;transform:scaleX(0.9120);">2</span>
<span class="t" id="t61" style="left:11.1px;top:301.7px;font-size:16.6px;color:#444;transform:scaleX(0.9120);">3</span>
<span class="t" id="t62" style="left:11.1px;top:325.7px;font-size:16.6px;color:#1d5039;transform:scaleX(0.9120);font-weight:bold;">4</span>
<span class="t" id="t63" style="left:11.1px;top:349.7px;font-size:16.6px;color:#444;transform:scaleX(0.9120);">5</span>
<span class="t" id="t64" style="left:11.1px;top:373.7px;font-size:16.6px;color:#444;transform:scaleX(0.9120);">6</span>
<span class="t" id="t65" style="left:11.1px;top:397.7px;font-size:16.6px;color:#444;transform:scaleX(0.9120);">7</span>
<span class="t" id="t66" style="left:11.1px;top:421.7px;font-size:16.6px;color:#444;transform:scaleX(0.9120);">8</span>
<span class="t" id="t67" style="left:11.1px;top:445.7px;font-size:16.6px;color:#444;transform:scaleX(0.9120);">9</span>
<span class="t" id="t68" style="left:8.2px;top:469.7px;font-size:16.6px;color:#444;transform:scaleX(0.8640);">10</span>
<span class="t" id="t69" style="left:8.8px;top:493.7px;font-size:16.6px;color:#444;transform:scaleX(0.8640);">11</span>
<span class="t" id="t70" style="left:8.2px;top:517.7px;font-size:16.6px;color:#444;transform:scaleX(0.8640);">12</span>
<span class="t" id="t71" style="left:8.2px;top:541.7px;font-size:16.6px;color:#444;transform:scaleX(0.8640);">13</span>
<span class="t" id="t72" style="left:8.2px;top:565.7px;font-size:16.6px;color:#444;transform:scaleX(0.8640);">14</span>
<span class="t" id="t73" style="left:8.2px;top:589.7px;font-size:16.6px;color:#444;transform:scaleX(0.8640);">15</span>
<span class="t" id="t74" style="left:8.2px;top:613.7px;font-size:16.6px;color:#444;transform:scaleX(0.8640);">16</span>
<span class="t" id="t75" style="left:8.2px;top:637.7px;font-size:16.6px;color:#444;transform:scaleX(0.8640);">17</span>
<span class="t" id="t76" style="left:34.8px;top:255.0px;font-size:16px;color:#111;transform:scaleX(0.9352);">No Decimal Places</span>
<span class="t" id="t77" style="left:287.0px;top:254.8px;font-size:15.5px;color:#111;transform:scaleX(1.0435);">2</span>
<span class="t" id="t78" style="left:34.8px;top:303.0px;font-size:16px;color:#111;transform:scaleX(0.9577);">Number</span>
<span class="t" id="t79" style="left:185.3px;top:303.0px;font-size:16px;color:#111;transform:scaleX(0.9191);">Rounded</span>
<span class="t" id="t80" style="left:303.3px;top:303.0px;font-size:16px;color:#111;transform:scaleX(0.9427);">Round Down</span>
<span class="t" id="t81" style="left:430.3px;top:303.0px;font-size:16px;color:#111;transform:scaleX(0.9258);">Round Up</span>
<span class="t" id="t82" style="left:39.5px;top:326.8px;font-size:15.5px;color:#111;transform:scaleX(0.9790);">34.67893</span>
<span class="t" id="t83" style="left:39.5px;top:350.8px;font-size:15.5px;color:#111;transform:scaleX(0.9790);">34.67065</span>
<span class="t" id="t84" style="left:39.5px;top:374.8px;font-size:15.5px;color:#111;transform:scaleX(0.9790);">34.67488</span>
<span class="t" id="t85" style="left:72.8px;top:398.8px;font-size:15.5px;color:#111;transform:scaleX(0.9943);">97.2</span>
<span class="t" id="t86" style="left:47.4px;top:422.8px;font-size:15.5px;color:#111;transform:scaleX(0.9887);">97.2364</span>
<span class="t" id="t87" style="left:47.4px;top:446.8px;font-size:15.5px;color:#111;transform:scaleX(0.9887);">97.2634</span>
<span class="t" id="t88" style="left:232.0px;top:326.8px;font-size:15.5px;color:#111;transform:scaleX(0.9899);">34.68000</span>
<span class="t" id="t89" style="left:108.0px;top:666.5px;font-size:15.9px;color:#1b5138;transform:scaleX(0.9779);font-weight:bold;">Rounding</span>
<span class="t" id="t90" style="left:6.3px;top:697.0px;font-size:13px;color:#fff;transform:scaleX(0.8547);font-weight:bold;">READY</span>
<span class="t" id="t91" style="left:267.3px;top:77.6px;font-size:14.0px;color:#444;transform:scaleX(1.0060);">A</span>
<span class="t" id="t92" style="left:292.6px;top:79.7px;font-size:11.5px;color:#444;transform:scaleX(0.9646);">A</span>
<span class="t" id="t93" style="left:279.3px;top:118.6px;font-size:14.7px;color:#444;transform:scaleX(1.1126);">A</span>
<span class="t" id="t94" style="left:993.8px;top:69.4px;font-size:16.3px;color:#3b68a8;transform:scaleX(0.9655);">A</span>
<span class="t" id="t95" style="left:994.3px;top:84.5px;font-size:16.0px;color:#6e4a85;transform:scaleX(0.9610);">Z</span>
<!-- cursor -->
<svg style="left:267px;top:335px" width="14" height="14" viewBox="0 0 14 14">
  <path d="M4.6 0.7 H9.4 V4.6 H13.3 V9.4 H9.4 V13.3 H4.6 V9.4 H0.7 V4.6 H4.6 Z" fill="#fff" stroke="#111" stroke-width="1.2"/>
</svg>
<!-- watermark -->
<div class="a" style="left:1142.5px;top:659.5px;width:60px;height:33.5px;background:rgba(40,28,40,0.33);border-radius:5px 0 0 0"></div>
<div class="a" style="left:1142.5px;top:693px;width:60px;height:29px;background:rgba(10,30,20,0.16)"></div>
<div class="a" style="left:1145.5px;top:662.8px;width:11.2px;height:10.5px;background:rgba(255,255,255,0.48);border-radius:1px 1px 4px 4px"></div>
<div class="a" style="left:1159px;top:662.8px;width:11.0px;height:10.5px;background:rgba(255,255,255,0.48);border-radius:1px 1px 4px 4px"></div>
<div class="a" style="left:1172px;top:662.8px;width:11.0px;height:10.5px;background:rgba(255,255,255,0.48);border-radius:1px 1px 4px 4px"></div>
<div class="a" style="left:1185px;top:662.8px;width:11.0px;height:10.5px;background:rgba(255,255,255,0.48);border-radius:1px 1px 4px 4px"></div>
<div class="a" style="left:1159px;top:676.2px;width:11.0px;height:11.2px;background:rgba(255,255,255,0.48);border-radius:1px 1px 4px 4px"></div>
<div class="a" style="left:1172px;top:676.2px;width:11.0px;height:11.2px;background:rgba(255,255,255,0.92);border-radius:1px 1px 4px 4px"></div>
<div class="a" style="left:1185px;top:676.2px;width:11.0px;height:11.2px;background:rgba(255,255,255,0.48);border-radius:1px 1px 4px 4px"></div>
<div class="a" style="left:1159px;top:689.8px;width:11.0px;height:3.2px;background:rgba(255,255,255,0.9);border-radius:1px 1px 0 0"></div>
<div class="a" style="left:1159px;top:693px;width:11.0px;height:8.0px;background:rgba(255,255,255,0.3);border-radius:0 0 4px 4px"></div>
<div class="a" style="left:1172px;top:689.8px;width:11.0px;height:3.2px;background:rgba(255,255,255,0.5);border-radius:1px 1px 0 0"></div>
<div class="a" style="left:1172px;top:693px;width:11.0px;height:8.0px;background:rgba(255,255,255,0.3);border-radius:0 0 4px 4px"></div>
<div class="a" style="left:1185px;top:689.8px;width:11.0px;height:3.2px;background:rgba(255,255,255,0.5);border-radius:1px 1px 0 0"></div>
<div class="a" style="left:1185px;top:693px;width:11.0px;height:8.0px;background:rgba(255,255,255,0.3);border-radius:0 0 4px 4px"></div>
<div class="a" style="left:1145.5px;top:704.0px;width:11.2px;height:10.6px;background:rgba(255,255,255,0.3);border-radius:1px 1px 4px 4px"></div>
<div class="a" style="left:1185px;top:704.0px;width:11.0px;height:10.6px;background:rgba(255,255,255,0.3);border-radius:1px 1px 4px 4px"></div>
<span class="t" style="left:1162.6px;top:697px;font-size:16px;color:#dcebe2;transform:scale(0.68,0.8);transform-origin:0 50%">100%</span>
</body></html>
